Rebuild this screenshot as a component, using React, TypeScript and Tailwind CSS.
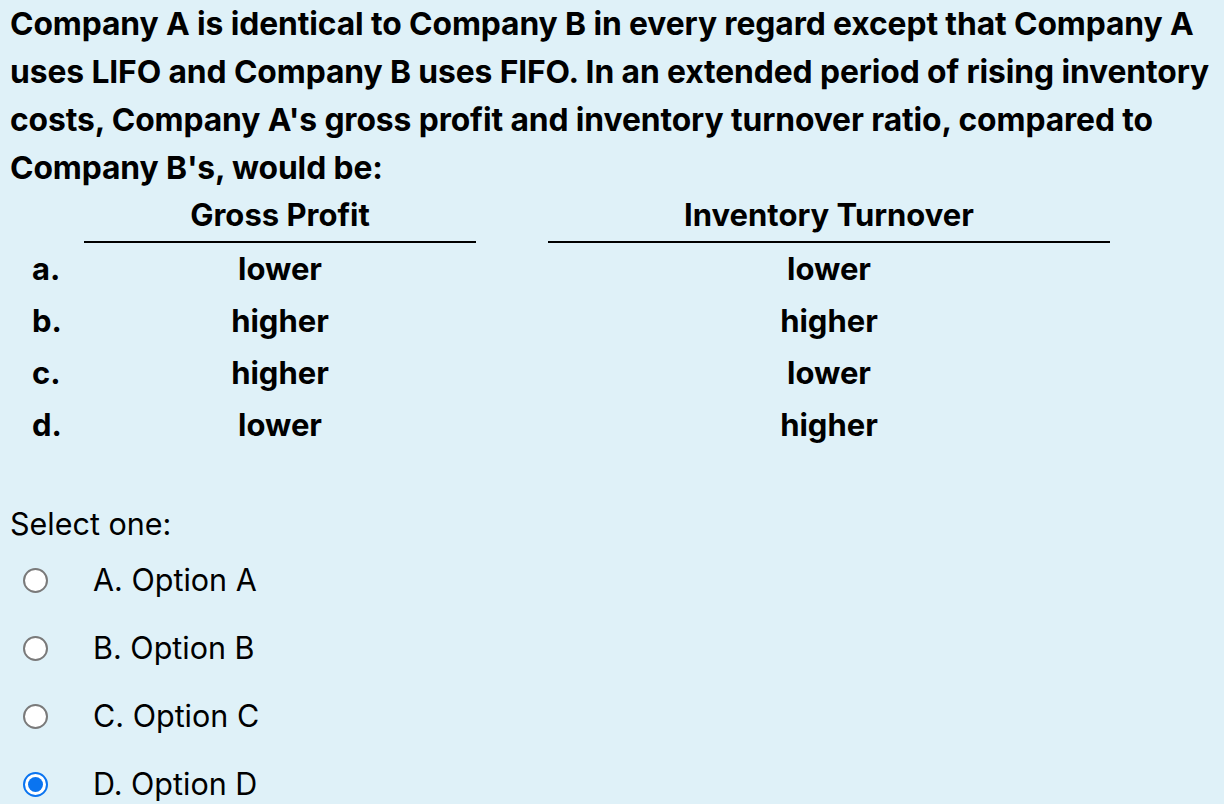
import { useState } from 'react';

const rows = [
  { label: 'a.', gross: 'lower', turnover: 'lower' },
  { label: 'b.', gross: 'higher', turnover: 'higher' },
  { label: 'c.', gross: 'higher', turnover: 'lower' },
  { label: 'd.', gross: 'lower', turnover: 'higher' },
];

const options = ['A. Option A', 'B. Option B', 'C. Option C', 'D. Option D'];

export default function App() {
  const [selected, setSelected] = useState(3);

  return (
    <div
      className="min-h-[804px] w-full bg-[#dff1f8] text-black pl-[10px] pr-[2px]"
      style={{ fontFamily: 'Inter, "Noto Sans", sans-serif' }}
    >
      <p className="text-[31.8px] font-bold leading-[48px] tracking-[-0.1px]">
        Company A is identical to Company B in every regard except that Company A uses LIFO and
        Company B uses FIFO. In an extended period of rising inventory costs, Company A's gross
        profit and inventory turnover ratio, compared to Company B's, would be:
      </p>

      <div className="text-[31px] font-bold">
        <div className="flex h-[51px] items-end">
          <div className="w-[74px]" />
          <div className="flex h-full w-[392px] items-center justify-center border-b-2 border-black pb-[2px]">
            Gross Profit
          </div>
          <div className="w-[72px]" />
          <div className="flex h-full w-[562px] items-center justify-center border-b-2 border-black pb-[2px]">
            Inventory Turnover
          </div>
        </div>
        {rows.map((r) => (
          <div key={r.label} className="flex h-[52px] items-center">
            <div className="w-[74px] pl-[22px]">{r.label}</div>
            <div className="w-[392px] text-center">{r.gross}</div>
            <div className="w-[72px]" />
            <div className="w-[562px] text-center">{r.turnover}</div>
          </div>
        ))}
      </div>

      <div className="mt-[53px] text-[30.5px] leading-[40px]">Select one:</div>
      <div className="mt-[2px] flex flex-col">
        {options.map((o, i) => (
          <label key={o} className="flex h-[68px] cursor-pointer items-center text-[30.5px]">
            <span className="flex w-[83px] items-center pl-[13px]">
              {selected === i ? (
                <span className="flex h-[25px] w-[25px] items-center justify-center rounded-full border-[2px] border-[#0a74f0] bg-white">
                  <span className="h-[15px] w-[15px] rounded-full bg-[#0a74f0]" />
                </span>
              ) : (
                <span className="h-[25px] w-[25px] rounded-full border-[2px] border-[#7a7a7a] bg-white" />
              )}
            </span>
            <input
              type="radio"
              name="answer"
              className="hidden"
              checked={selected === i}
              onChange={() => setSelected(i)}
            />
            <span>{o}</span>
          </label>
        ))}
      </div>
    </div>
  );
}
